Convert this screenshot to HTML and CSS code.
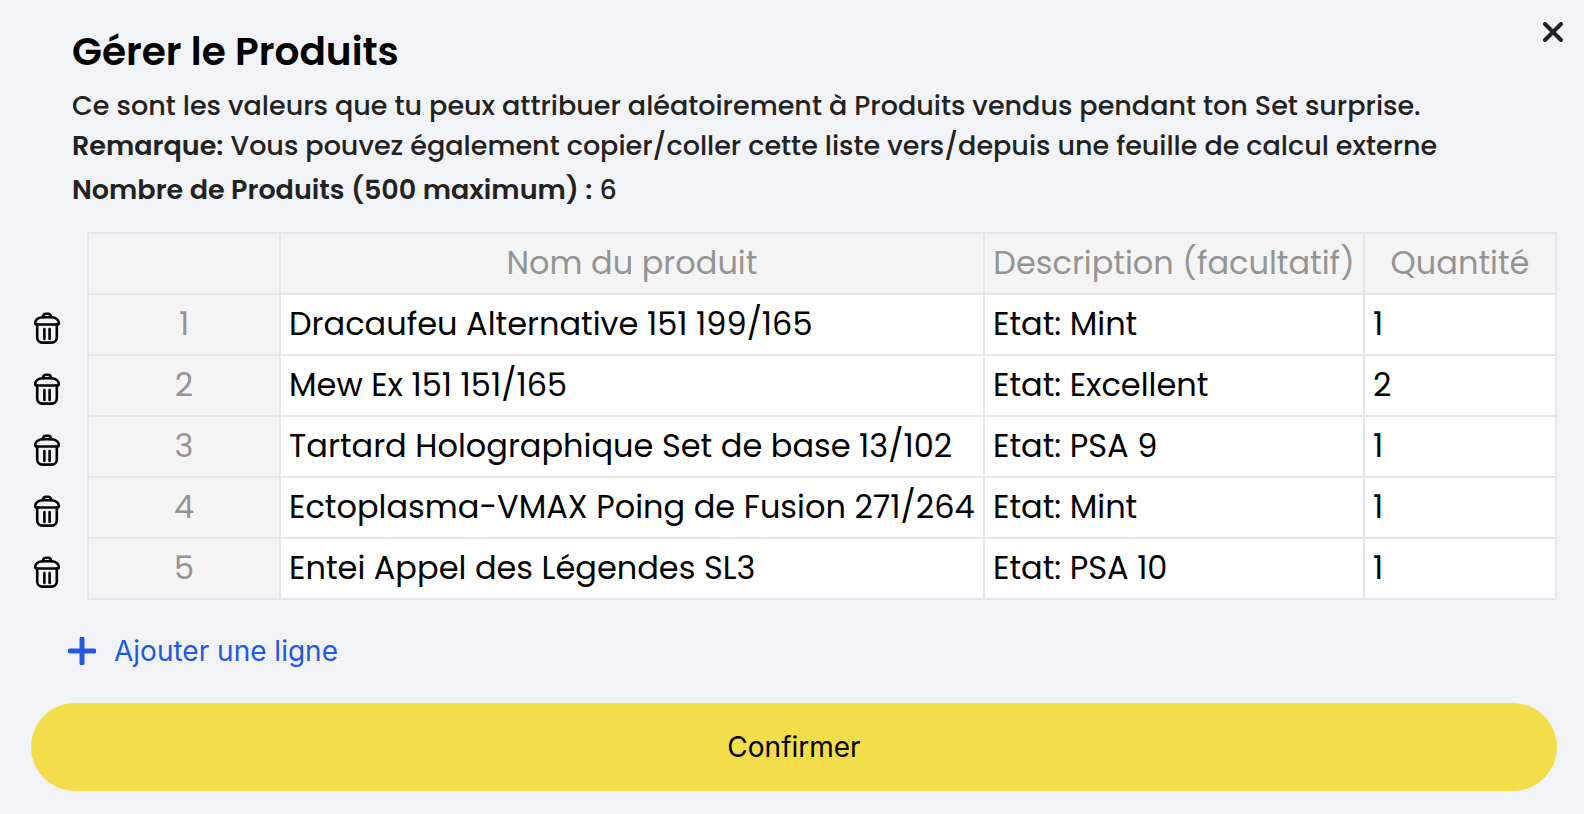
FILE: index.html
```html
<!DOCTYPE html>
<html lang="fr">
<head>
  <meta charset="UTF-8">
  <meta name="viewport" content="width=device-width, initial-scale=1.0">
  <title>Gérer le Produits</title>
  <link rel="stylesheet" href="styles.css">
</head>
<body>
  <!-- Icône poubelle partagée -->
  <svg class="sprite" aria-hidden="true">
    <symbol id="trash" viewBox="0 0 28 34" stroke-width="2.6">
      <path d="M10 6.200C10 3.600 11 2.700 13 2.700h2c2 0 3 .9 3 3.500"/>
      <path d="M3.300 13.500C1.700 13.500 1.800 10.500 3.800 8.400 5.200 6.900 7 6.200 9 6.200h10c2 0 3.800.7 5.200 2.200 2 2.100 2.100 5.100.5 5.100z"/>
      <path d="M4.200 13.500v13.100a5 5 0 0 0 5 5h9.600a5 5 0 0 0 5-5V13.500"/>
      <path d="M11.400 18v10M16.600 18v10"/>
    </symbol>
  </svg>

  <main class="modal">
    <button class="close" type="button" aria-label="Fermer">
      <svg viewBox="0 0 20 20"><path d="M2 2l16 16M18 2L2 18"/></svg>
    </button>

    <header class="intro">
      <h1>Gérer le Produits</h1>
      <p>Ce sont les valeurs que tu peux attribuer aléatoirement à Produits vendus pendant ton Set surprise.</p>
      <p><strong>Remarque:</strong> Vous pouvez également copier/coller cette liste vers/depuis une feuille de calcul externe</p>
      <p class="count"><strong>Nombre de Produits (500 maximum) :</strong> 6</p>
    </header>

    <div class="sheet">
      <div class="row-actions">
        <button type="button" aria-label="Supprimer la ligne 1"><svg><use href="#trash"/></svg></button>
        <button type="button" aria-label="Supprimer la ligne 2"><svg><use href="#trash"/></svg></button>
        <button type="button" aria-label="Supprimer la ligne 3"><svg><use href="#trash"/></svg></button>
        <button type="button" aria-label="Supprimer la ligne 4"><svg><use href="#trash"/></svg></button>
        <button type="button" aria-label="Supprimer la ligne 5"><svg><use href="#trash"/></svg></button>
      </div>

      <table>
        <colgroup>
          <col class="col-index">
          <col class="col-name">
          <col class="col-desc">
          <col class="col-qty">
        </colgroup>
        <thead>
          <tr>
            <th></th>
            <th scope="col">Nom du produit</th>
            <th scope="col">Description (facultatif)</th>
            <th scope="col">Quantité</th>
          </tr>
        </thead>
        <tbody>
          <tr><th scope="row">1</th><td>Dracaufeu Alternative 151 199/165</td><td>Etat: Mint</td><td>1</td></tr>
          <tr><th scope="row">2</th><td>Mew Ex 151 151/165</td><td>Etat: Excellent</td><td>2</td></tr>
          <tr><th scope="row">3</th><td>Tartard Holographique Set de base 13/102</td><td>Etat: PSA 9</td><td>1</td></tr>
          <tr><th scope="row">4</th><td>Ectoplasma-VMAX Poing de Fusion 271/264</td><td>Etat: Mint</td><td>1</td></tr>
          <tr><th scope="row">5</th><td>Entei Appel des Légendes SL3</td><td>Etat: PSA 10</td><td>1</td></tr>
        </tbody>
      </table>
    </div>

    <button class="add-row" type="button">
      <svg viewBox="0 0 28 28"><path d="M14 2v24M2 14h24"/></svg>
      Ajouter une ligne
    </button>

    <button class="confirm" type="button">Confirmer</button>
  </main>
</body>
</html>
```
FILE: styles.css
```css
* {
  box-sizing: border-box;
}

body {
  margin: 0;
  background: #f1f3f7;
  color: #222;
  font-family: Poppins, Inter, sans-serif;
  font-size: 27px;
}

button {
  border: none;
  padding: 0;
  background: none;
  color: #000;
  cursor: pointer;
}

svg {
  display: block;
  fill: none;
  stroke: currentColor;
  stroke-linecap: round;
  stroke-linejoin: round;
}

.sprite {
  position: absolute;
  width: 0;
  height: 0;
}

.modal {
  position: relative;
  padding: 32px 27px 23px 31px;
}

.close {
  position: absolute;
  top: 22px;
  right: 21px;
  color: #222;
}

.close svg {
  width: 20px;
  height: 20px;
  stroke-width: 4;
}

/* Texte d'introduction */
.intro {
  padding-left: 41px;
}

h1 {
  margin: 0 0 14px;
  color: #000;
  font-size: 39px;
  font-weight: 600;
  line-height: 40px;
}

p {
  margin: 0;
  font-weight: 500;
  line-height: 40px;
}

.count {
  margin-top: 4px;
}

strong {
  font-weight: 600;
}

/* Tableau */
.sheet {
  display: flex;
  align-items: flex-start;
  margin-top: 22px;
}

.row-actions {
  display: flex;
  flex-direction: column;
  flex: 0 0 56px;
  padding-top: 65px;
}

.row-actions button {
  display: flex;
  align-items: center;
  width: 32px;
  height: 61px;
  padding-left: 2px;
}

.row-actions svg {
  width: 28px;
  height: 34px;
}

table {
  flex: 1;
  border-collapse: collapse;
  table-layout: fixed;
  width: 100%;
  font-size: 32px;
}

th,
td {
  height: 61px;
  padding: 0 8px 2px;
  border: 2px solid #e6e6e6;
  line-height: 48px;
  white-space: nowrap;
}

th {
  background: #f4f4f4;
  color: #949494;
  font-weight: 400;
  text-align: center;
}

td {
  background: #fff;
  color: #000;
}

.col-index,
.col-qty {
  width: 192px;
}

.col-desc {
  width: 380px;
}

/* Actions du bas */
.add-row,
.confirm {
  font-family: Inter, sans-serif;
  font-size: 28px;
}

.add-row {
  display: flex;
  align-items: center;
  gap: 18px;
  margin: 28px 0 0 37px;
  color: #2559dc;
  line-height: 42px;
}

.add-row svg {
  width: 28px;
  height: 28px;
  stroke-width: 5;
}

.confirm {
  width: 100%;
  height: 88px;
  margin-top: 31px;
  border-radius: 44px;
  background: #f4dd4b;
}
```
